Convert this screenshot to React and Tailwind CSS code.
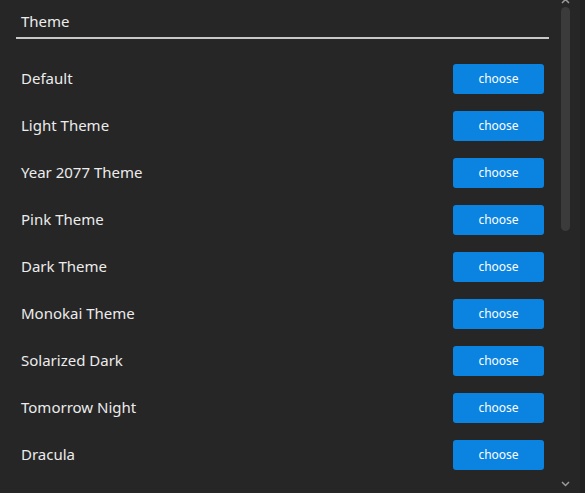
import React from 'react';

const themes = [
  'Default',
  'Light Theme',
  'Year 2077 Theme',
  'Pink Theme',
  'Dark Theme',
  'Monokai Theme',
  'Solarized Dark',
  'Tomorrow Night',
  'Dracula',
];

const ThemeRow = ({ name }) => (
  <div className="flex h-[47px] items-center justify-between px-[5px]">
    <span className="text-[15px] text-[#ececec]">{name}</span>
    <button className="h-[30px] w-[91px] rounded-[3px] bg-[#0a84e0] text-[12px] text-white">
      choose
    </button>
  </div>
);

const App = () => {
  return (
    <div
      className="flex h-[493px] w-[585px] overflow-hidden bg-[#262626]"
      style={{ fontFamily: '"Noto Sans", "Open Sans", sans-serif' }}
    >
      <div className="w-[556px] shrink-0 pl-4 pr-[7px]">
        <div className="px-[5px] pt-[11px] pb-[6px] text-[15px] leading-[20px] text-[#ececec]">
          Theme
        </div>
        <div className="h-[2px] bg-[#c8c8c8]" />
        <div className="mt-[16px]">
          {themes.map((t) => (
            <ThemeRow key={t} name={t} />
          ))}
        </div>
      </div>

      {/* scrollbar */}
      <div className="flex w-[19px] flex-col items-center">
        <svg width="9" height="6" viewBox="0 0 9 6" className="mt-[-2px]">
          <path d="M1 5 L4.5 1.5 L8 5" stroke="#9a9a9a" strokeWidth="1.5" fill="none" />
        </svg>
        <div className="mt-[3px] h-[224px] w-[9px] rounded-full bg-[#3b3b3b]" />
        <div className="flex-1" />
        <svg width="9" height="6" viewBox="0 0 9 6" className="mb-[6px]">
          <path d="M1 1 L4.5 4.5 L8 1" stroke="#9a9a9a" strokeWidth="1.5" fill="none" />
        </svg>
      </div>
      <div className="flex-1" />
      <div className="w-[5px] bg-[#202020]" />
    </div>
  );
};

export default App;
